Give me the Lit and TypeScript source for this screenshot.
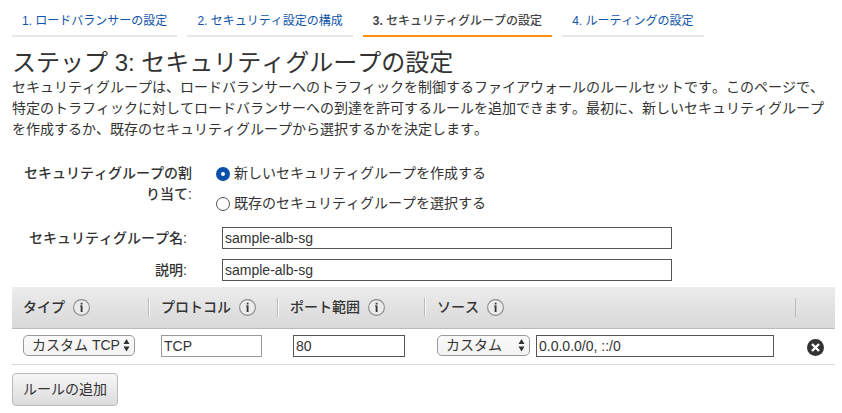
import { LitElement, html, css, svg } from "lit";
import { customElement, state } from "lit/decorators.js";

interface Step {
  number: string;
  title: string;
  current?: boolean;
}

const STEPS: Step[] = [
  { number: "1.", title: "ロードバランサーの設定" },
  { number: "2.", title: "セキュリティ設定の構成" },
  { number: "3.", title: "セキュリティグループの設定", current: true },
  { number: "4.", title: "ルーティングの設定" },
];

const COLUMNS = [
  { key: "type", label: "タイプ" },
  { key: "protocol", label: "プロトコル" },
  { key: "port", label: "ポート範囲" },
  { key: "source", label: "ソース" },
];

const infoIcon = html`<svg class="info" viewBox="0 0 17 17" width="17" height="17" aria-hidden="true">
  ${svg`<circle cx="8.5" cy="8.5" r="7.9" fill="#ebebeb" stroke="#8c8c8c" stroke-width="1.1"/>
  <rect x="7.7" y="3.8" width="1.8" height="1.7" fill="#333"/>
  <path d="M7 6.6h2.5v6.4H7.7V7.5H7z" fill="#333"/>`}
</svg>`;

const arrows = html`<svg class="arrows" viewBox="0 0 7 13" width="7" height="13" aria-hidden="true">
  ${svg`<path d="M3.5 0L6.5 5H.5zM3.5 12.5L.5 7.5h6z" fill="#333"/>`}
</svg>`;

@customElement("app-root")
export class AppRoot extends LitElement {
  @state() private mode = "new";

  static styles = css`
    :host {
      display: block;
      box-sizing: border-box;
      padding: 6px 7px 7px 12px;
      background: #fff;
      color: #333;
      font: 14px/21px "Liberation Sans", "Noto Sans CJK JP", sans-serif;
      font-kerning: none;
    }
    * {
      box-sizing: border-box;
    }
    .steps {
      display: flex;
      gap: 10px;
      font-size: 12px;
    }
    .step {
      padding: 5px 10px 3px;
      border-bottom: 2px solid #e8e8e8;
      color: #1054a8;
      text-decoration: none;
      white-space: nowrap;
    }
    .step.current {
      border-color: #ff9010;
      color: #444;
      font-weight: 500;
    }
    .current .number {
      font-weight: 700;
    }
    .title {
      margin: 12px 0 0;
      font-size: 24px;
      line-height: 28px;
      font-weight: 400;
    }
    .intro {
      margin: 0;
      padding-right: 8px;
    }
    .form {
      margin: 23px 0 6px;
      display: flex;
      flex-direction: column;
      gap: 10px;
    }
    .row {
      display: flex;
      align-items: center;
    }
    .group {
      display: flex;
      align-items: flex-start;
      gap: 24px;
      padding-bottom: 3px;
    }
    .caption {
      width: 180px;
      flex: none;
      text-align: right;
      font-weight: 500;
    }
    .row .caption {
      width: 175px;
      margin-right: 35px;
    }
    .choices {
      display: flex;
      flex-direction: column;
      gap: 9px;
    }
    .choice {
      display: flex;
      align-items: center;
      gap: 4px;
    }
    .radio {
      appearance: none;
      width: 14px;
      height: 14px;
      margin: 0;
      border: 1px solid #555;
      border-radius: 50%;
      background: #fff;
    }
    .radio:checked {
      border: 5px solid #0a4fa8;
    }
    .field {
      height: 22px;
      margin: 0;
      padding: 0 2px;
      border: 1px solid #555;
      border-radius: 0;
      background: #fff;
      color: #333;
      font: inherit;
      min-width: 0;
    }
    .wide {
      flex: 0 1 450px;
    }
    .rules {
      width: 100%;
      border-collapse: separate;
      border-spacing: 0;
      table-layout: fixed;
    }
    .col-type { width: 137px; }
    .col-protocol { width: 129px; }
    .col-port { width: 147px; }
    .col-remove { width: 39px; }
    .rules th {
      padding: 11px 0;
      border-bottom: 1px solid #bbb;
      font-weight: 500;
      text-align: left;
    }
    .rules thead {
      background: linear-gradient(#ececec, #d8d8d8);
    }
    .head {
      display: flex;
      align-items: center;
      gap: 8px;
      height: 19px;
      padding-left: 11px;
      border-right: 1px solid #bbb;
      box-shadow: 1px 0 #f8f8f8;
    }
    th + th .head {
      padding-left: 12px;
    }
    .rules .col-source .head {
      box-shadow: none;
    }
    .rules td {
      height: 36px;
      padding: 0 0 2px 11px;
      border-bottom: 1px solid #d8d8d8;
      vertical-align: middle;
    }
    .rules td + td {
      padding-left: 12px;
    }
    .rules td:last-child {
      padding: 2px 0 0 11px;
    }
    .cell {
      display: flex;
      align-items: center;
      gap: 6px;
    }
    .pick {
      position: relative;
      flex: none;
      display: flex;
      width: fit-content;
      margin-bottom: 1px;
    }
    .select {
      appearance: none;
      height: 21px;
      margin: 0;
      padding: 0 0 0 8px;
      border: 1px solid #999;
      border-radius: 5px;
      background: linear-gradient(#fafafa, #f2f2f2);
      color: #333;
      font: inherit;
      line-height: 19px;
    }
    .pick-type .select { width: 112px; }
    .pick-source .select { width: 93px; }
    .arrows {
      position: absolute;
      right: 5px;
      top: 4px;
      pointer-events: none;
    }
    .protocol {
      width: 101px;
      border-color: #999;
    }
    .port {
      width: 112px;
      margin-left: 3px;
    }
    .source {
      flex: 1;
      margin-right: 22px;
    }
    .remove {
      display: flex;
      padding: 0;
      border: 0;
      background: none;
    }
    .add {
      display: block;
      height: 33px;
      margin-top: 8px;
      padding: 0 10px;
      border: 1px solid #bbb;
      border-radius: 4px;
      background: linear-gradient(#f6f6f6, #dcdcdc);
      color: #333;
      font: inherit;
    }
  `;

  private choice(value: string, label: string) {
    return html`<label class="choice">
      <input
        class="radio"
        type="radio"
        name="mode"
        .value=${value}
        .checked=${this.mode === value}
        @change=${() => (this.mode = value)}
      />${label}
    </label>`;
  }

  render() {
    return html`
      <nav class="steps">
        ${STEPS.map(
          (s) => html`<a class="step ${s.current ? "current" : ""}" href="#"
            ><span class="number">${s.number}</span> ${s.title}</a
          >`
        )}
      </nav>
      <h1 class="title">ステップ 3: セキュリティグループの設定</h1>
      <p class="intro">セキュリティグループは、ロードバランサーへのトラフィックを制御するファイアウォールのルールセットです。このページで、特定のトラフィックに対してロードバランサーへの到達を許可するルールを追加できます。最初に、新しいセキュリティグループを作成するか、既存のセキュリティグループから選択するかを決定します。</p>
      <div class="form">
        <div class="group" role="radiogroup" aria-labelledby="assign">
          <span class="caption" id="assign">セキュリティグループの割り当て:</span>
          <div class="choices">
            ${this.choice("new", "新しいセキュリティグループを作成する")}
            ${this.choice("existing", "既存のセキュリティグループを選択する")}
          </div>
        </div>
        <div class="row">
          <label class="caption" for="name">セキュリティグループ名:</label>
          <input class="field wide" id="name" type="text" value="sample-alb-sg" />
        </div>
        <div class="row">
          <label class="caption" for="description">説明:</label>
          <input class="field wide" id="description" type="text" value="sample-alb-sg" />
        </div>
      </div>
      <table class="rules">
        <colgroup>
          ${COLUMNS.map((c) => html`<col class="col-${c.key}" />`)}
          <col class="col-remove" />
        </colgroup>
        <thead>
          <tr>
            ${COLUMNS.map(
              (c) => html`<th class="col-${c.key}" scope="col"><div class="head">${c.label}${infoIcon}</div></th>`
            )}
            <th></th>
          </tr>
        </thead>
        <tbody>
          <tr>
            <td>
              <div class="pick pick-type">
                <select class="select" aria-label="タイプ"><option>カスタム TCP</option></select>
                ${arrows}
              </div>
            </td>
            <td>
              <div class="cell"><input class="field protocol" type="text" aria-label="プロトコル" value="TCP" readonly /></div>
            </td>
            <td>
              <div class="cell"><input class="field port" type="text" aria-label="ポート範囲" value="80" /></div>
            </td>
            <td>
              <div class="cell">
                <div class="pick pick-source">
                  <select class="select" aria-label="ソース"><option>カスタム</option></select>
                  ${arrows}
                </div>
                <input class="field source" type="text" aria-label="ソース" value="0.0.0.0/0, ::/0" />
              </div>
            </td>
            <td>
              <button class="remove" type="button" aria-label="削除">
                <svg viewBox="0 0 17 17" width="17" height="17" aria-hidden="true">
                  <circle cx="8.5" cy="8.5" r="8.5" fill="#333" />
                  <path d="M5 5l7 7M12 5l-7 7" stroke="#fff" stroke-width="2.4" />
                </svg>
              </button>
            </td>
          </tr>
        </tbody>
      </table>
      <button class="add" type="button">ルールの追加</button>
    `;
  }
}
